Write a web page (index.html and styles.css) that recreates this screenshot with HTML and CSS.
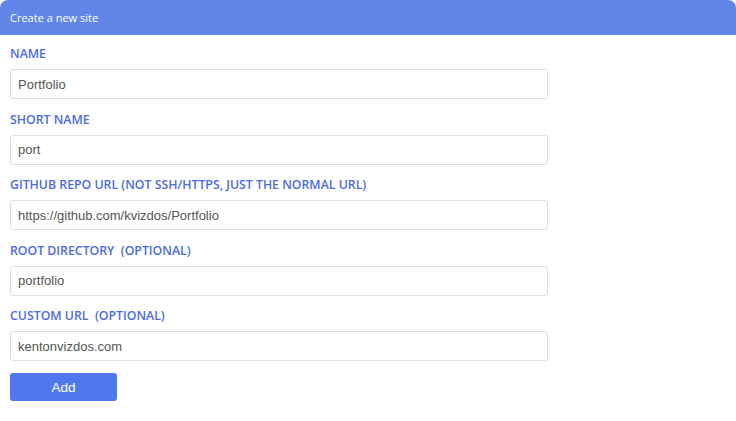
FILE: index.html
```html
<!DOCTYPE html>
<html>
<head>
<meta charset="utf-8">
<link rel="stylesheet" href="styles.css">
</head>
<body>
<div class="panel">
  <div class="panel-header">Create a new site</div>
  <form class="panel-body">
    <div class="field">
      <label class="label">NAME</label>
      <input class="input" type="text" value="Portfolio">
    </div>
    <div class="field">
      <label class="label">SHORT NAME</label>
      <input class="input" type="text" value="port">
    </div>
    <div class="field">
      <label class="label">GITHUB REPO URL (NOT SSH/HTTPS, JUST THE NORMAL URL)</label>
      <input class="input" type="text" value="https://github.com/kvizdos/Portfolio">
    </div>
    <div class="field">
      <label class="label">ROOT DIRECTORY&nbsp; <span class="opt">(OPTIONAL)</span></label>
      <input class="input" type="text" value="portfolio">
    </div>
    <div class="field">
      <label class="label">CUSTOM URL&nbsp; <span class="opt">(OPTIONAL)</span></label>
      <input class="input" type="text" value="kentonvizdos.com">
    </div>
    <button class="btn" type="button">Add</button>
  </form>
</div>
</body>
</html>
```
FILE: styles.css
```css
html, body {
  margin: 0;
  padding: 0;
  background: #ffffff;
}
.panel {
  width: 736px;
  font-family: "Open Sans", "Noto Sans", sans-serif;
}
.panel-header {
  height: 35px;
  background: #6186e8;
  color: #ffffff;
  font-size: 11px;
  line-height: 35px;
  padding-left: 10px;
  border-radius: 8px 8px 0 0;
}
.panel-body {
  padding: 9px 10px 0 10px;
  display: flex;
  flex-direction: column;
}
.field {
  display: flex;
  flex-direction: column;
  margin-bottom: 10.5px;
}
.label {
  font-size: 12.3px;
  font-weight: 600;
  color: #4c6be3;
  line-height: 20px;
  margin-bottom: 5px;
  white-space: pre;
}
.opt {
  font-weight: 600;
}
.input {
  box-sizing: border-box;
  width: 538px;
  height: 30px;
  border: 1px solid #dedede;
  border-radius: 3px;
  padding: 0 7px;
  font-family: "Liberation Sans", Arial, sans-serif;
  font-size: 13px;
  color: #555555;
  background: #ffffff;
  outline: none;
  margin: 0;
}
.btn {
  box-sizing: border-box;
  width: 107px;
  height: 28px;
  margin-top: 1.5px;
  background: #4f77ee;
  color: #ffffff;
  border: none;
  border-radius: 3px;
  font-family: "Liberation Sans", Arial, sans-serif;
  font-size: 13.5px;
  padding: 0;
}
```
